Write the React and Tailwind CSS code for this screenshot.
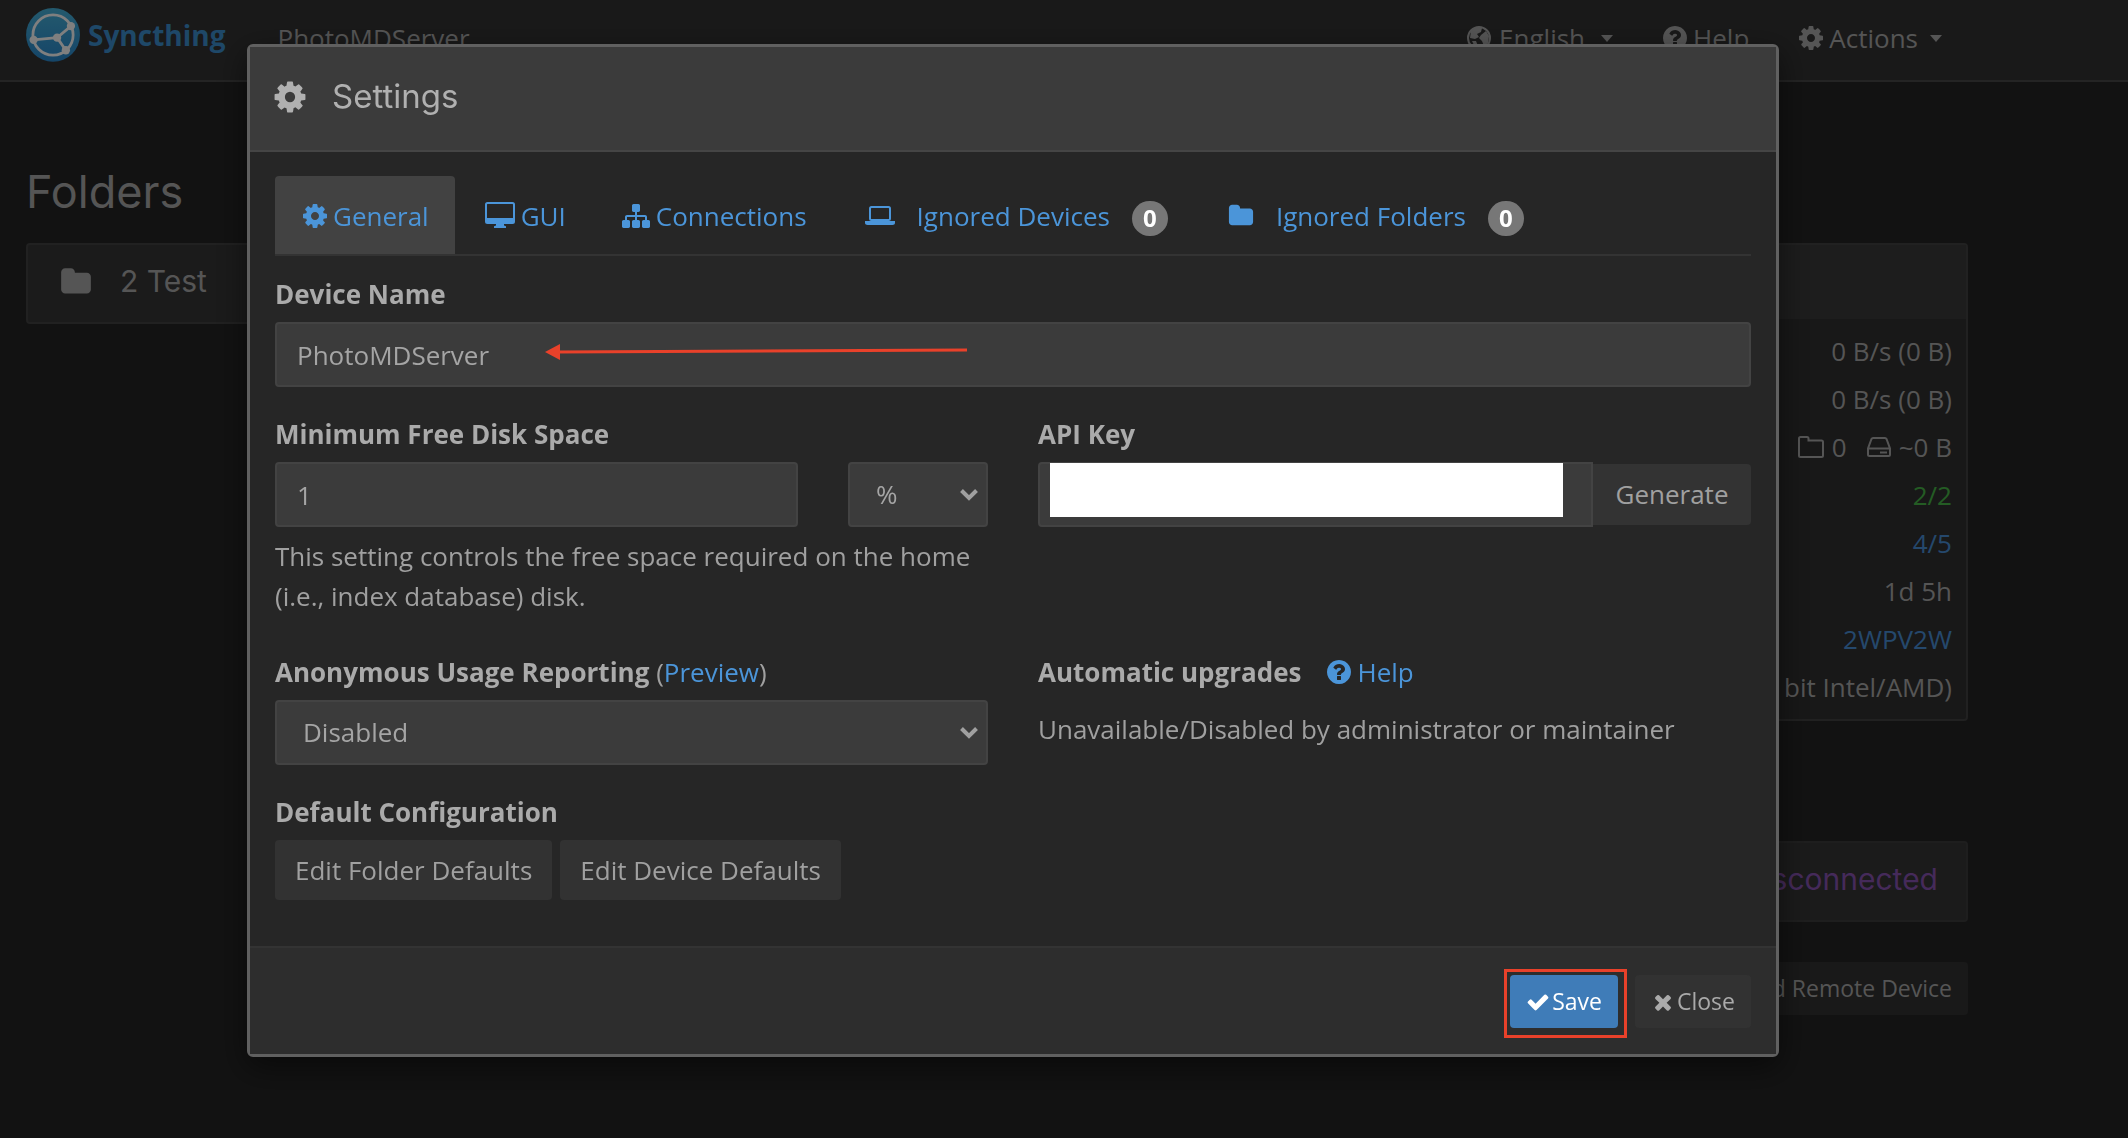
import React, { useState } from 'react';

const ICONS = {
    cog: 'M1152 896q0-106-75-181t-181-75-181 75-75 181 75 181 181 75 181-75 75-181zm512-109v222q0 12-8 23t-20 13l-185 28q-19 54-39 91 35 50 107 138 10 12 10 25t-9 23q-27 37-99 108t-94 71q-12 0-26-9l-138-108q-44 23-91 38-16 136-29 186-7 28-36 28h-222q-14 0-24.5-8.5t-11.5-21.5l-28-184q-49-16-90-37l-141 107q-10 9-25 9-14 0-25-11-126-114-165-168-7-10-7-23 0-12 8-23 15-21 51-66.5t54-70.5q-27-50-41-99l-183-27q-13-2-21-12.5t-8-23.5v-222q0-12 8-23t19-13l186-28q14-46 39-92-40-57-107-138-10-12-10-24 0-10 9-23 26-36 98.5-107.5t94.5-71.5q13 0 26 10l138 107q44-23 91-38 16-136 29-186 7-28 36-28h222q14 0 24.5 8.5t11.5 21.5l28 184q49 16 90 37l142-107q9-9 24-9 13 0 25 10 129 119 165 170 7 8 7 22 0 12-8 23-15 21-51 66.5t-54 70.5q26 50 41 98l183 28q13 2 21 12.5t8 23.5z',
    check: 'M1671 566q0 40-28 68l-724 724-136 136q-28 28-68 28t-68-28l-136-136-362-362q-28-28-28-68t28-68l136-136q28-28 68-28t68 28l294 295 656-657q28-28 68-28t68 28l136 136q28 28 28 68z',
    times: 'M1490 1322q0 40-28 68l-136 136q-28 28-68 28t-68-28l-294-294-294 294q-28 28-68 28t-68-28l-136-136q-28-28-28-68t28-68l294-294-294-294q-28-28-28-68t28-68l136-136q28-28 68-28t68 28l294 294 294-294q28-28 68-28t68 28l136 136q28 28 28 68t-28 68l-294 294 294 294q28 28 28 68z',
    folder: 'M1728 608v704q0 92-66 158t-158 66h-1216q-92 0-158-66t-66-158v-960q0-92 66-158t158-66h320q92 0 158 66t66 158v32h672q92 0 158 66t66 158z',
    help: 'M1024 1376v-192q0-14-9-23t-23-9h-192q-14 0-23 9t-9 23v192q0 14 9 23t23 9h192q14 0 23-9t9-23zm256-672q0-88-55.5-163t-138.5-116-170-41q-243 0-371 213-15 24 8 42l132 100q7 6 19 6 16 0 25-12 53-68 86-92 34-24 86-24 48 0 85.5 26t37.5 59q0 38-20 61t-68 45q-63 28-115.5 86.5t-52.5 125.5v36q0 14 9 23t23 9h192q14 0 23-9t9-23q0-19 21.5-49.5t54.5-49.5q32-18 49-28.5t46-35 44.5-48 28-60.5 12.5-81zm384 192q0 209-103 385.5t-279.5 279.5-385.5 103-385.5-103-279.5-279.5-103-385.5 103-385.5 279.5-279.5 385.5-103 385.5 103 279.5 279.5 103 385.5z',
    sitemap: 'M1792 1248v320q0 40-28 68t-68 28h-320q-40 0-68-28t-28-68v-320q0-40 28-68t68-28h96v-192h-512v192h96q40 0 68 28t28 68v320q0 40-28 68t-68 28h-320q-40 0-68-28t-28-68v-320q0-40 28-68t68-28h96v-192h-512v192h96q40 0 68 28t28 68v320q0 40-28 68t-68 28h-320q-40 0-68-28t-28-68v-320q0-40 28-68t68-28h96v-192q0-52 38-90t90-38h512v-192h-96q-40 0-68-28t-28-68v-320q0-40 28-68t68-28h320q40 0 68 28t28 68v320q0 40-28 68t-68 28h-96v192h512q52 0 90 38t38 90v192h96q40 0 68 28t28 68z',
};

const Icon = ({ name, className = 'size-7' }) => (
    <svg viewBox="0 0 1792 1792" fill="currentColor" fillRule="evenodd" className={`shrink-0 ${className}`}>
        <path d={ICONS[name]} />
    </svg>
);

const DesktopIcon = () => (
    <svg viewBox="0 0 30 28" className="w-[30px] h-7 shrink-0" fill="currentColor">
        <path
            fillRule="evenodd"
            d="M2.5 0h25A2.5 2.5 0 0 1 30 2.5v17a2.5 2.5 0 0 1-2.5 2.5H19v1.5l2 .8V26H9v-1.7l2-.8V22H2.5A2.5 2.5 0 0 1 0 19.5v-17A2.5 2.5 0 0 1 2.5 0zM2 2.5V16h26V2.5a.5.5 0 0 0-.5-.5h-25a.5.5 0 0 0-.5.5z"
        />
    </svg>
);

const LaptopIcon = () => (
    <svg viewBox="0 0 30 22" className="w-[30px] h-[22px] shrink-0" fill="currentColor">
        <path
            fillRule="evenodd"
            d="M6.5 1h17A2.5 2.5 0 0 1 26 3.5v10a2.5 2.5 0 0 1-2.5 2.5h-17A2.5 2.5 0 0 1 4 13.5v-10A2.5 2.5 0 0 1 6.5 1zM6 3.5v10a.5.5 0 0 0 .5.5h17a.5.5 0 0 0 .5-.5v-10a.5.5 0 0 0-.5-.5h-17a.5.5 0 0 0-.5.5z"
        />
        <path d="M0 16h30v2c0 1.3-1.2 2-2.5 2h-25C1.2 20 0 19.3 0 18z" />
    </svg>
);

const GlobeIcon = () => (
    <svg viewBox="0 0 24 24" className="size-6 shrink-0" fill="none" stroke="currentColor" strokeWidth="2">
        <circle cx="12" cy="12" r="11" />
        <path fill="currentColor" d="M4 5l5-4 6 1-1 4-4 2 2 3-4 2-5-1zM14 9l5-4 3 5-1 7-4 3-2-5-3-3zM5 15l4 0 2 5-3 1z" stroke="none" />
    </svg>
);

const FolderOutlineIcon = () => (
    <svg viewBox="0 0 26 22" className="w-[26px] h-[22px] shrink-0" fill="none" stroke="currentColor" strokeWidth="2">
        <path d="M1 2.5Q1 1 2.5 1H9q1.5 0 1.5 1.5V4.5h13Q25 4.5 25 6v13.500q0 1.500-1.500 1.500h-21Q1 21 1 19.500z" />
    </svg>
);

const HddIcon = () => (
    <svg viewBox="0 0 24 20" className="w-6 h-5 shrink-0" fill="none" stroke="currentColor" strokeWidth="2">
        <path d="M1 11.500v6Q1 19 2.500 19h19q1.500 0 1.500-1.500v-6L19.500 2Q19 1 18 1H6Q5 1 4.500 2zM1 11.500h22" />
        <path d="M13 15.500h7" />
    </svg>
);

const Logo = () => (
    <svg viewBox="0 0 117.3 117.3" className="size-[54px] shrink-0">
        <defs>
            <linearGradient id="logo" x1="58.7" y1="117" x2="58.7" y2="0" gradientUnits="userSpaceOnUse">
                <stop offset="0" stopColor="#2a8ad0" />
                <stop offset="1" stopColor="#48b4dc" />
            </linearGradient>
        </defs>
        <circle cx="58.7" cy="58.5" r="58.5" fill="url(#logo)" />
        <g fill="none" stroke="#fff" strokeWidth="6">
            <circle cx="58.7" cy="58.5" r="43.7" />
            <path d="M97.6 39.4L67.5 64.4L86.5 91.8M16.6 69.1L67.5 64.4" />
        </g>
        <g fill="#fff">
            <circle cx="97.6" cy="39.3" r="9" />
            <circle cx="86.6" cy="91.8" r="9" />
            <circle cx="67.5" cy="64.4" r="9" />
            <circle cx="16.6" cy="69.1" r="9" />
        </g>
    </svg>
);

const Caret = () => (
    <svg viewBox="0 0 12 7" className="w-3 h-[7px] shrink-0 ml-2" fill="currentColor">
        <path d="M0 0h12L6 7z" />
    </svg>
);

const Chevron = () => (
    <svg
        viewBox="0 0 18 12"
        className="pointer-events-none absolute right-[10px] top-[27px] w-[18px] h-3"
        fill="none"
        stroke="currentColor"
        strokeWidth="4"
    >
        <path d="M1.5 1.5L9 9l7.5-7.5" />
    </svg>
);

const STATS = [
    { id: 'download', value: '0 B/s (0 B)' },
    { id: 'upload', value: '0 B/s (0 B)' },
    { id: 'local', local: true },
    { id: 'listeners', value: '2/2', color: 'text-[#48b848]' },
    { id: 'discovery', value: '4/5', href: '#discovery' },
    { id: 'uptime', value: '1d 5h' },
    { id: 'identification', value: '2WPV2W', href: '#identification' },
    { id: 'version', value: 'bit Intel/AMD)' },
];

const TABS = [
    { id: 'general', label: 'General', icon: <Icon name="cog" />, spacing: 'gap-1 px-[26px]' },
    { id: 'gui', label: 'GUI', icon: <DesktopIcon />, spacing: 'gap-[6px] px-[26px]' },
    { id: 'connections', label: 'Connections', icon: <Icon name="sitemap" />, spacing: 'gap-[6px] px-[26px]' },
    { id: 'devices', label: 'Ignored Devices', icon: <LaptopIcon />, spacing: 'gap-[22px] px-7', count: 0 },
    { id: 'folders', label: 'Ignored Folders', icon: <Icon name="folder" className="size-[26px]" />, spacing: 'gap-[22px] px-7', count: 0 },
];

const FIELD = 'h-[65px] rounded border-2 border-[#434343] bg-[#3b3b3b] text-[#a5a5a5] focus:outline-none';
const LABEL = 'font-bold text-[#aaa]';
const HEADING = "font-['Inter',sans-serif] font-normal";

const StatValue = ({ stat }) => {
    if (stat.local) {
        return (
            <span className="flex items-center justify-end gap-2">
                <FolderOutlineIcon />0
                <span className="w-1" />
                <HddIcon />
                ~0 B
            </span>
        );
    }
    if (stat.href) {
        return <a href={stat.href} className="text-[#4a90d9]">{stat.value}</a>;
    }
    return <span className={stat.color}>{stat.value}</span>;
};

const Navbar = () => (
    <nav className="flex h-[82px] items-start border-b-2 border-[#484848] bg-[#333] pl-[26px] pr-[186px]">
        <a href="#home" className="flex items-center gap-2 pt-2">
            <Logo />
            <span className="font-bold text-[28px] text-[#3d90d0]">Syncthing</span>
        </a>
        <span className="ml-[52px] pt-[18px] leading-10">PhotoMDServer</span>
        <div className="ml-auto flex gap-12 pt-[18px] leading-10">
            <button className="flex items-center gap-2"><GlobeIcon />English<Caret /></button>
            <a href="#help" className="flex items-center gap-1"><Icon name="help" />Help</a>
            <button className="flex items-center gap-1"><Icon name="cog" />Actions<Caret /></button>
        </div>
    </nav>
);

const Dashboard = () => (
    <main className="grid grid-cols-2 gap-14 pl-[26px] pr-[160px] pt-[82px]">
        <section>
            <h2 className={`text-[45px] leading-[56px] ${HEADING}`}>Folders</h2>
            <div className={`mt-[23px] flex h-[81px] items-center gap-7 rounded border-2 border-[#424242] bg-[#363636] px-8 pb-1 text-[30px] ${HEADING}`}>
                <Icon name="folder" className="size-8" />
                2 Test
            </div>
        </section>
        <section className="pt-[79px]">
            <div className="rounded border-2 border-[#424242] bg-[#303030]">
                <div className="h-[74px] bg-[#3a3a3a]" />
                <table className="mt-2 mb-2 w-full">
                    <tbody>
                        {STATS.map((stat) => (
                            <tr key={stat.id} className="h-12">
                                <td className="pr-[14px] text-right">
                                    <StatValue stat={stat} />
                                </td>
                            </tr>
                        ))}
                    </tbody>
                </table>
            </div>
            <div className={`mt-[120px] flex h-[81px] items-center justify-end rounded border-2 border-[#3d3d3d] bg-[#363636] px-7 pb-1 text-[30px] text-[#8a55b4] ${HEADING}`}>
                Disconnected
            </div>
            <div className="mt-10 flex justify-end">
                <button className="h-[53px] rounded bg-[#323232] px-4 text-[23px]">Add Remote Device</button>
            </div>
        </section>
    </main>
);

const SettingsModal = () => {
    const [tab, setTab] = useState('general');
    const [deviceName, setDeviceName] = useState('PhotoMDServer');
    const [minFree, setMinFree] = useState('1');
    const [apiKey, setApiKey] = useState('');

    return (
        <div className="fixed inset-0 overflow-auto bg-black/50 pl-[247px] pr-[349px] pt-11">
            <div role="dialog" aria-label="Settings" className="rounded-md border-[3px] border-[#606060] bg-[#262626] text-[#a0a0a0] shadow-[0_10px_30px_rgba(0,0,0,0.5)]">
                {/* Header */}
                <header className="flex h-[105px] items-center gap-6 border-b-2 border-[#454545] bg-[#3b3b3b] px-[22px] pb-1 text-[#b0b0b0]">
                    <Icon name="cog" className="size-9" />
                    <h1 className={`text-[33px] ${HEADING}`}>Settings</h1>
                </header>

                <div className="px-[25px] pt-6">
                    {/* Tabs */}
                    <div role="tablist" className="flex gap-1 border-b-2 border-[#333]">
                        {TABS.map((t) => (
                            <button
                                key={t.id}
                                role="tab"
                                aria-selected={tab === t.id}
                                onClick={() => setTab(t.id)}
                                className={`flex h-[78px] items-center rounded-t pt-[2px] text-[#4b95d9] ${t.spacing} ${tab === t.id ? 'bg-[#424242]' : ''}`}
                            >
                                {t.icon}
                                {t.label}
                                {t.count !== undefined && (
                                    <span className="mt-1 flex h-[35px] w-9 items-center justify-center rounded-full bg-[#777] text-[24px] font-bold text-white">
                                        {t.count}
                                    </span>
                                )}
                            </button>
                        ))}
                    </div>

                    {/* Device name */}
                    <div className="relative mt-[18px]">
                        <label htmlFor="deviceName" className={`block leading-10 ${LABEL}`}>Device Name</label>
                        <input
                            id="deviceName"
                            value={deviceName}
                            onChange={(e) => setDeviceName(e.target.value)}
                            className={`mt-2 w-full px-5 ${FIELD}`}
                        />
                        <svg viewBox="0 0 424 18" className="pointer-events-none absolute left-[270px] top-[68px] h-[18px] w-[424px]">
                            <path d="M12 10L422 8" stroke="#e9412a" strokeWidth="3" />
                            <path d="M0 10L15 2v16z" fill="#e9412a" />
                        </svg>
                    </div>

                    <div className="mt-[27px] grid grid-cols-2 gap-x-[50px]">
                        {/* Disk space */}
                        <div>
                            <label htmlFor="minFree" className={`block leading-10 ${LABEL}`}>Minimum Free Disk Space</label>
                            <div className="mt-2 flex gap-[50px]">
                                <input
                                    id="minFree"
                                    value={minFree}
                                    onChange={(e) => setMinFree(e.target.value)}
                                    className={`min-w-0 flex-1 px-5 ${FIELD}`}
                                />
                                <div className="relative w-[140px]">
                                    <select aria-label="Unit" className={`w-full appearance-none px-[26px] ${FIELD}`}>
                                        <option>%</option>
                                        <option>kB</option>
                                        <option>MB</option>
                                        <option>GB</option>
                                    </select>
                                    <Chevron />
                                </div>
                            </div>
                            <p className="mt-[9px] leading-10">
                                This setting controls the free space required on the home (i.e., index database) disk.
                            </p>
                        </div>

                        {/* API key */}
                        <div>
                            <label htmlFor="apiKey" className={`block leading-10 ${LABEL}`}>API Key</label>
                            <div className="relative mt-2 flex items-center">
                                <input
                                    id="apiKey"
                                    value={apiKey}
                                    onChange={(e) => setApiKey(e.target.value)}
                                    className={`min-w-0 flex-1 rounded-r-none px-5 ${FIELD}`}
                                />
                                <button className="h-[61px] w-[158px] rounded-r bg-[#333]">Generate</button>
                                <span className="absolute left-3 right-[188px] top-px h-[54px] bg-white" />
                            </div>
                        </div>

                        {/* Usage reporting */}
                        <div className="mt-9">
                            <div className="leading-10">
                                <label htmlFor="usage" className={LABEL}>Anonymous Usage Reporting</label>{' '}
                                (<a href="#preview" className="text-[#4b95d9]">Preview</a>)
                            </div>
                            <div className="relative mt-2">
                                <select id="usage" className={`w-full appearance-none px-[26px] ${FIELD}`}>
                                    <option>Disabled</option>
                                    <option>Version 3</option>
                                </select>
                                <Chevron />
                            </div>
                        </div>

                        {/* Upgrades */}
                        <div className="mt-9">
                            <div className="flex items-center gap-6 leading-10">
                                <span className={LABEL}>Automatic upgrades</span>
                                <a href="#upgrades" className="flex items-center gap-1 text-[#4b95d9]">
                                    <Icon name="help" />Help
                                </a>
                            </div>
                            <p className="mt-[17px] leading-10">Unavailable/Disabled by administrator or maintainer</p>
                        </div>
                    </div>

                    {/* Defaults */}
                    <div className="mt-[27px] pb-[46px]">
                        <h2 className={`leading-10 ${LABEL}`}>Default Configuration</h2>
                        <div className="mt-2 flex gap-2">
                            <button className="h-[60px] rounded bg-[#323232] px-5">Edit Folder Defaults</button>
                            <button className="h-[60px] rounded bg-[#323232] px-5">Edit Device Defaults</button>
                        </div>
                    </div>
                </div>

                {/* Footer */}
                <footer className="flex items-start justify-end gap-2 border-t-2 border-[#333] bg-[#2d2d2d] px-[25px] pt-[21px] pb-4 text-[23px]">
                    <div className="border-[3px] border-[#e9412a] pt-[3px] pr-[6px] pb-[7px] pl-[3px]">
                        <button className="flex h-[53px] items-center gap-[2px] rounded bg-[#3f7cb8] px-4 text-white">
                            <Icon name="check" className="size-6" />Save
                        </button>
                    </div>
                    <button className="mt-[6px] flex h-[53px] items-center gap-[2px] rounded bg-[#323232] px-4 text-[#aaa]">
                        <Icon name="times" className="size-6" />Close
                    </button>
                </footer>
            </div>
        </div>
    );
};

const App = () => (
    <div className="min-h-screen bg-[#252525] font-['Open_Sans',sans-serif] text-[26px] text-[#aaa]">
        <Navbar />
        <Dashboard />
        <SettingsModal />
    </div>
);

export default App;
